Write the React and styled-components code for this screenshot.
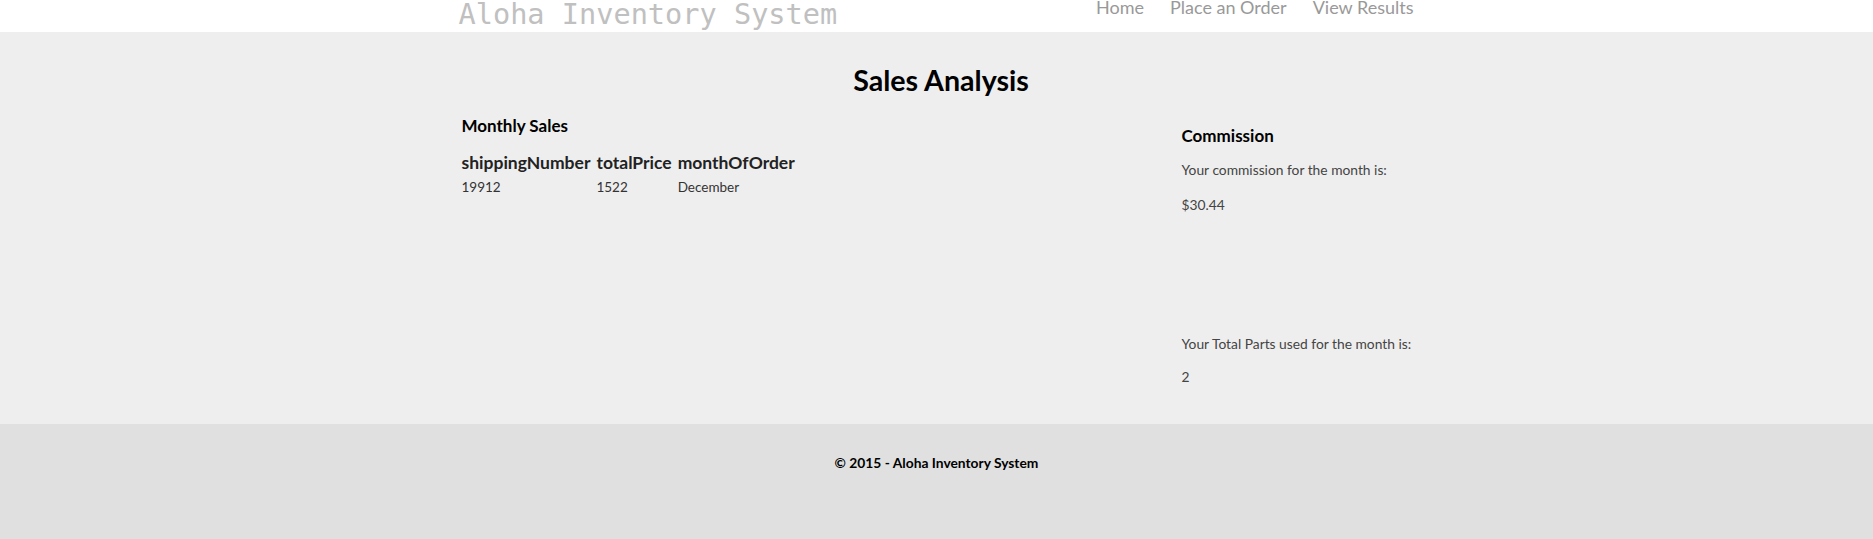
import React from 'react';
import styled, { createGlobalStyle } from 'styled-components';

const GlobalStyle = createGlobalStyle`
  html, body {
    margin: 0;
    padding: 0;
  }
  body {
    font-family: 'Lato', 'Noto Sans', sans-serif;
    background: #e0e0e0;
  }
`;

const Page = styled.div`
  display: flex;
  flex-direction: column;
  min-height: 100vh;
`;

const Header = styled.header`
  height: 32px;
  background: #ffffff;
  overflow: hidden;
`;

const Container = styled.div`
  width: 950px;
  margin: 0 auto;
`;

const HeaderInner = styled(Container)`
  display: flex;
  justify-content: space-between;
  align-items: flex-start;
`;

const Logo = styled.a`
  margin-left: -3px;
  font-family: 'DejaVu Sans Mono', 'Liberation Mono', monospace;
  font-size: 28.6px;
  line-height: 28px;
  color: #c0c0c0;
  text-decoration: none;
  white-space: nowrap;
`;

const Nav = styled.nav`
  display: flex;
  gap: 26px;
  margin: -1px -2px 0 0;
`;

const NavLink = styled.a`
  font-size: 18px;
  line-height: 17px;
  color: #999999;
  text-decoration: none;
  white-space: nowrap;
`;

const Main = styled.main`
  background: #eeeeee;
  padding: 32px 0 37px;
`;

const Title = styled.h2`
  margin: 0;
  padding-left: 9px;
  font-size: 28.6px;
  line-height: 33px;
  font-weight: 700;
  color: #000;
  text-align: center;
`;

const Columns = styled.div`
  display: grid;
  grid-template-columns: 720px 1fr;
  align-items: start;
`;

const Heading = styled.h4`
  margin: ${(p) => p.$top}px 0 0;
  font-size: 17px;
  line-height: 20px;
  font-weight: 700;
  color: #000;
`;

const SalesTable = styled.table`
  margin-top: 16px;
  border-collapse: collapse;
`;

const Th = styled.th`
  padding: 0 6px 3px 0;
  font-size: 17.5px;
  line-height: 22px;
  font-weight: 700;
  color: #222;
  text-align: left;
`;

const Td = styled.td`
  padding: 0 6px 0 0;
  font-size: 13.5px;
  line-height: 20px;
  color: #333;
`;

const Para = styled.p`
  margin: ${(p) => p.$top}px 0 0;
  font-size: 13.8px;
  line-height: 20px;
  color: #444;
  white-space: nowrap;
`;

const Footer = styled.footer`
  flex: 1;
  background: #e0e0e0;
  padding-top: 30px;
  text-align: center;
`;

const FooterText = styled.p`
  margin: 0;
  font-size: 13.8px;
  line-height: 18px;
  font-weight: 700;
  color: #000;
`;

const sales = [{ shippingNumber: 19912, totalPrice: 1522, monthOfOrder: 'December' }];

export default function App() {
  return (
    <Page>
      <GlobalStyle />
      <Header>
        <HeaderInner>
          <Logo href="#">Aloha Inventory System</Logo>
          <Nav>
            <NavLink href="#">Home</NavLink>
            <NavLink href="#">Place an Order</NavLink>
            <NavLink href="#">View Results</NavLink>
          </Nav>
        </HeaderInner>
      </Header>
      <Main>
        <Container>
          <Title>Sales Analysis</Title>
          <Columns>
            <section>
              <Heading $top={19}>Monthly Sales</Heading>
              <SalesTable>
                <thead>
                  <tr>
                    <Th>shippingNumber</Th>
                    <Th>totalPrice</Th>
                    <Th>monthOfOrder</Th>
                  </tr>
                </thead>
                <tbody>
                  {sales.map((s) => (
                    <tr key={s.shippingNumber}>
                      <Td>{s.shippingNumber}</Td>
                      <Td>{s.totalPrice}</Td>
                      <Td>{s.monthOfOrder}</Td>
                    </tr>
                  ))}
                </tbody>
              </SalesTable>
            </section>
            <aside>
              <Heading $top={29}>Commission</Heading>
              <Para $top={14}>Your commission for the month is:</Para>
              <Para $top={15}>$30.44</Para>
              <Para $top={119}>Your Total Parts used for the month is:</Para>
              <Para $top={13}>2</Para>
            </aside>
          </Columns>
        </Container>
      </Main>
      <Footer>
        <FooterText>© 2015 - Aloha Inventory System</FooterText>
      </Footer>
    </Page>
  );
}
